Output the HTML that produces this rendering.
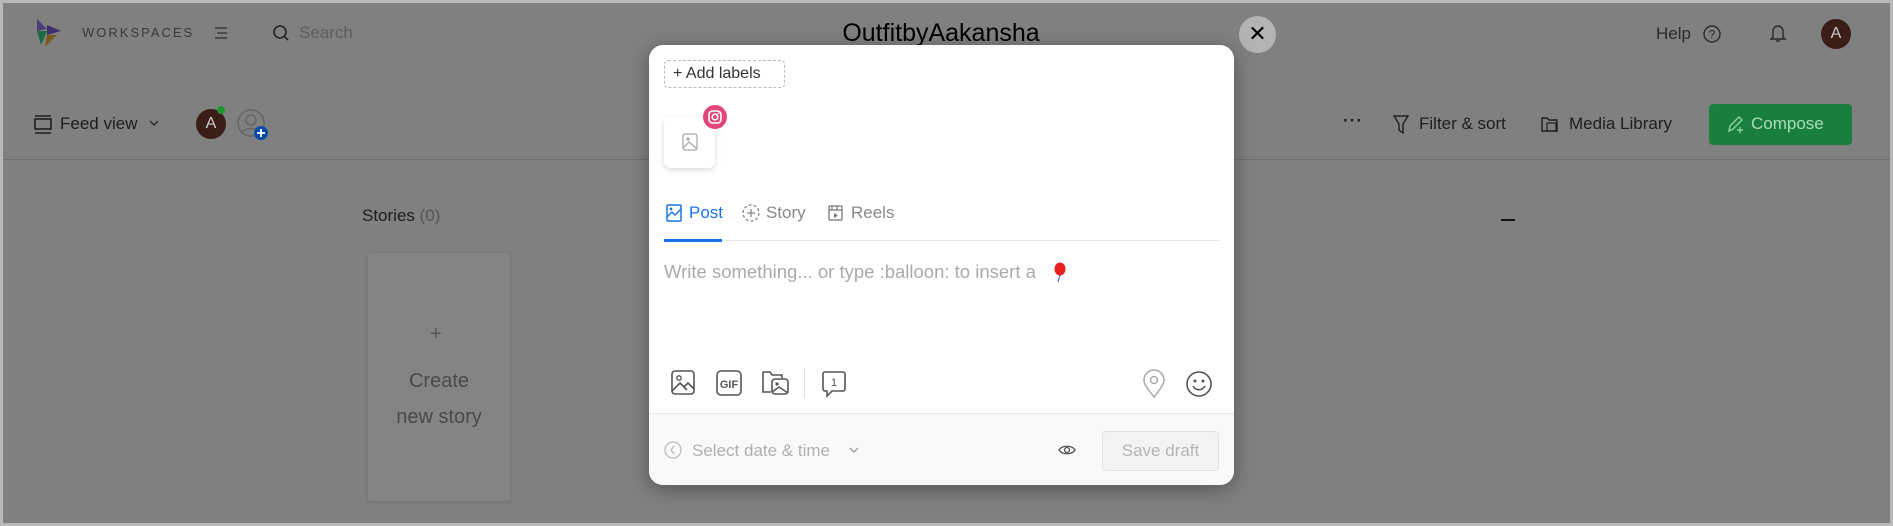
<!DOCTYPE html>
<html><head><meta charset="utf-8"><style>
*{box-sizing:border-box;margin:0;padding:0}
body{width:1893px;height:526px;overflow:hidden;background:#b9b9b9;font-family:"Liberation Sans",sans-serif;position:relative}
.page{position:absolute;left:3px;top:3px;width:1887px;height:520px;background:#808080;overflow:hidden}
.a{position:absolute;white-space:nowrap}
.dk{color:#1e1e1e}
.g{color:#2a2a2a}
svg{position:absolute;overflow:visible}
.modal{position:absolute;left:649px;top:45px;width:585px;height:440px;background:#fff;border-radius:14px;box-shadow:0 4px 20px rgba(0,0,0,.35);overflow:hidden}
.m{position:absolute;white-space:nowrap}
</style></head><body>
<div class="page">
<svg style="left:30px;top:14px" width="30" height="32" viewBox="0 0 30 32">
<path d="M4 2 L14 12 L4 14Z" fill="#4b3d78"/><path d="M14 8 L28 14 L14 18Z" fill="#3e2f6e"/>
<path d="M4 14 L14 14 L8 28Z" fill="#1d6b3a"/><path d="M14 18 L24 18 L12 30Z" fill="#7a5a1a"/></svg>
<div class="a" style="left:79px;top:22px;font-size:13px;letter-spacing:2px;color:#3a3a3a">WORKSPACES</div>
<svg style="left:212px;top:24px" width="12" height="12"><path d="M0 1H12M2 6H12M0 11H12" stroke="#3a3a3a" stroke-width="1.4"/></svg>
<svg style="left:270px;top:22px" width="16" height="16"><circle cx="7" cy="7" r="6" stroke="#222" stroke-width="1.6" fill="none"/><path d="M11 11L15 15" stroke="#222" stroke-width="1.6"/></svg>
<div class="a" style="left:296px;top:20px;font-size:17px;color:#5e5e5e">Search</div>
<div class="a" style="left:818px;top:16px;font-size:25px;color:#000;width:240px;text-align:center">OutfitbyAakansha</div>
<div class="a" style="left:1236px;top:13px;width:37px;height:37px;border-radius:50%;background:#b3b3b3;color:#000;font-size:22px;text-align:center;line-height:36px">✕</div>
<div class="a g" style="left:1653px;top:21px;font-size:17px">Help</div>
<svg style="left:1700px;top:22px" width="18" height="18"><circle cx="9" cy="9" r="8" stroke="#2a2a2a" stroke-width="1.4" fill="none"/><text x="9" y="13.5" font-size="12" text-anchor="middle" fill="#2a2a2a" font-family="Liberation Sans">?</text></svg>
<svg style="left:1767px;top:20px" width="16" height="20"><path d="M3 14V8a5 5 0 0110 0v6l2 2H1z" stroke="#2a2a2a" stroke-width="1.4" fill="none"/><path d="M6 18h4" stroke="#2a2a2a" stroke-width="1.4"/></svg>
<div class="a" style="left:1818px;top:16px;width:30px;height:30px;border-radius:50%;background:#3b1e18;color:#ccc;font-size:16px;text-align:center;line-height:30px">A</div>
<svg style="left:31px;top:112px" width="18" height="20"><rect x="1" y="4" width="16" height="10" stroke="#1e1e1e" stroke-width="1.6" fill="none"/><path d="M1 1H17M1 18H17" stroke="#1e1e1e" stroke-width="1.6"/></svg>
<div class="a dk" style="left:57px;top:111px;font-size:17px">Feed view</div>
<svg style="left:146px;top:117px" width="10" height="6"><path d="M1 1L5 5L9 1" stroke="#2a2a2a" stroke-width="1.3" fill="none"/></svg>
<div class="a" style="left:193px;top:106px;width:30px;height:30px;border-radius:50%;background:#3b1e18;color:#ccc;font-size:16px;text-align:center;line-height:30px">A</div>
<div class="a" style="left:214px;top:103px;width:8px;height:8px;border-radius:50%;background:#1a9a2a"></div>
<svg style="left:234px;top:106px" width="32" height="32"><circle cx="14" cy="14" r="13" stroke="#666" stroke-width="1.6" fill="none"/><circle cx="14" cy="11" r="5" stroke="#666" stroke-width="1.6" fill="none"/><path d="M5 24c3-6 15-6 18 0" stroke="#666" stroke-width="1.6" fill="none"/><circle cx="24" cy="24" r="7" fill="#0a4aa8"/><path d="M24 20v8M20 24h8" stroke="#fff" stroke-width="1.8"/></svg>
<div class="a dk" style="left:1340px;top:108px;font-size:17px;font-weight:bold;letter-spacing:1px">···</div>
<svg style="left:1390px;top:112px" width="16" height="20"><path d="M1 1H15L10 9V18L6 15V9Z" stroke="#1e1e1e" stroke-width="1.4" fill="none"/></svg>
<div class="a dk" style="left:1416px;top:111px;font-size:17px">Filter &amp; sort</div>
<svg style="left:1538px;top:112px" width="18" height="18"><path d="M1 3h5l2 2h8v11H1z" stroke="#1e1e1e" stroke-width="1.4" fill="none"/><rect x="6" y="8" width="9" height="8" stroke="#1e1e1e" stroke-width="1.2" fill="none"/></svg>
<div class="a dk" style="left:1566px;top:111px;font-size:17px">Media Library</div>
<div class="a" style="left:1706px;top:101px;width:143px;height:41px;background:#1a7f3e;border-radius:4px"></div>
<svg style="left:1724px;top:112px" width="18" height="18"><path d="M2 16L3 11L12 2L15 5L6 14Z" stroke="#8fd0a4" stroke-width="1.4" fill="none"/><path d="M13 12v6M10 15h6" stroke="#8fd0a4" stroke-width="1.4"/></svg>
<div class="a" style="left:1748px;top:111px;font-size:17px;color:#a8dcb8">Compose</div>
<div class="a" style="left:0;top:156px;width:1887px;height:1px;background:#707070"></div>
<div class="a dk" style="left:359px;top:203px;font-size:17px">Stories <span style="color:#555">(0)</span></div>
<div class="a" style="left:365px;top:250px;width:142px;height:248px;background:#848484;box-shadow:0 1px 4px rgba(0,0,0,.15);border-radius:3px"></div>
<div class="a" style="left:427px;top:320px;font-size:20px;color:#555">+</div>
<div class="a" style="left:365px;top:360px;width:142px;text-align:center;font-size:20px;color:#4a4a4a;line-height:36px;white-space:normal">Create<br>new story</div>
<div class="a" style="left:1498px;top:216px;width:14px;height:2px;background:#111"></div>
</div>
<div class="modal">
<div class="m" style="left:15px;top:15px;width:121px;height:28px;border:1px dashed #bbb;border-radius:4px;font-size:16px;color:#333;line-height:26px;padding-left:8px">+ Add labels</div>
<div class="m" style="left:15px;top:72px;width:51px;height:51px;border-radius:6px;background:#fff;box-shadow:0 2px 6px rgba(0,0,0,.15)"></div>
<svg style="left:33px;top:88px" width="16" height="18"><rect x="1" y="1" width="14" height="16" rx="2" stroke="#aaa" stroke-width="1.3" fill="none"/><circle cx="6" cy="6" r="1.6" fill="#aaa"/><path d="M1 15L7 9L15 16" stroke="#aaa" stroke-width="1.3" fill="none"/></svg>
<div class="m" style="left:54px;top:60px;width:24px;height:24px;border-radius:50%;background:#e0457b"></div>
<svg style="left:59px;top:65px" width="14" height="14"><rect x="1" y="1" width="12" height="12" rx="3.5" stroke="#fff" stroke-width="1.6" fill="none"/><circle cx="7" cy="7" r="2.8" stroke="#fff" stroke-width="1.6" fill="none"/><circle cx="10.5" cy="3.5" r=".9" fill="#fff"/></svg>
<svg style="left:17px;top:159px" width="16" height="18"><rect x="1" y="1" width="14" height="16" rx="1" stroke="#1a73e8" stroke-width="1.5" fill="none"/><path d="M1 13L6 8L9 11L15 5" stroke="#1a73e8" stroke-width="1.4" fill="none"/><circle cx="5" cy="5" r="1.4" fill="#1a73e8"/></svg>
<div class="m" style="left:40px;top:158px;font-size:17px;color:#1a73e8">Post</div>
<svg style="left:93px;top:159px" width="18" height="18"><circle cx="9" cy="9" r="8" stroke="#888" stroke-width="1.3" fill="none" stroke-dasharray="3 2"/><path d="M9 5v8M5 9h8" stroke="#888" stroke-width="1.3"/></svg>
<div class="m" style="left:117px;top:158px;font-size:17px;color:#888">Story</div>
<svg style="left:179px;top:160px" width="15" height="16"><rect x="1" y="1" width="13" height="14" rx="1" stroke="#777" stroke-width="1.3" fill="none"/><path d="M1 5H14M4 1v4M9 1v4" stroke="#777" stroke-width="1.2"/><path d="M6 8L10 10.5L6 13Z" fill="#777"/></svg>
<div class="m" style="left:202px;top:158px;font-size:17px;color:#888">Reels</div>
<div class="m" style="left:15px;top:195px;width:555px;height:1px;background:#e5e7eb"></div>
<div class="m" style="left:15px;top:194px;width:58px;height:3px;background:#1a73e8"></div>
<div class="m" style="left:15px;top:216px;font-size:18.5px;color:#aaa">Write something... or type :balloon: to insert a</div>
<svg style="left:403px;top:217px" width="14" height="22"><ellipse cx="8" cy="7" rx="5.5" ry="6.5" fill="#e82020"/><path d="M8 13L6 20" stroke="#4a4ae0" stroke-width="1"/></svg>
<svg style="left:22px;top:325px" width="24" height="26"><rect x="1" y="1" width="22" height="23" rx="3" stroke="#555" stroke-width="1.6" fill="none"/><circle cx="8" cy="8" r="2.2" stroke="#555" stroke-width="1.4" fill="none"/><path d="M1 21L9 13L16 20M13 17L17 13L23 19" stroke="#555" stroke-width="1.6" fill="none"/></svg>
<svg style="left:67px;top:325px" width="26" height="26"><rect x="1" y="1" width="24" height="24" rx="4" stroke="#555" stroke-width="1.6" fill="none"/><text x="13" y="18" text-anchor="middle" font-size="11" font-weight="bold" fill="#555" font-family="Liberation Sans">GIF</text></svg>
<svg style="left:113px;top:323px" width="28" height="28"><path d="M1 4h7l2 3h10v3" stroke="#555" stroke-width="1.6" fill="none"/><path d="M1 4v20h8" stroke="#555" stroke-width="1.6" fill="none"/><rect x="10" y="11" width="16" height="15" rx="3" stroke="#555" stroke-width="1.6" fill="none"/><circle cx="15" cy="16" r="1.6" fill="#555"/><path d="M10 24L17 19L26 25" stroke="#555" stroke-width="1.5" fill="none"/></svg>
<div class="m" style="left:155px;top:323px;width:1px;height:30px;background:#ddd"></div>
<svg style="left:173px;top:326px" width="24" height="26"><path d="M3 1h18a2 2 0 012 2v15a2 2 0 01-2 2H10L5 25V20H3a2 2 0 01-2-2V3a2 2 0 012-2z" stroke="#555" stroke-width="1.6" fill="none"/><text x="12" y="15" text-anchor="middle" font-size="11" fill="#555" font-family="Liberation Sans">1</text></svg>
<svg style="left:494px;top:325px" width="22" height="28"><path d="M11 27C4 18 1 14 1 10a10 10 0 0120 0c0 4-3 8-10 17z" stroke="#aaa" stroke-width="1.5" fill="none"/><circle cx="11" cy="10" r="3.5" stroke="#aaa" stroke-width="1.5" fill="none"/></svg>
<svg style="left:537px;top:326px" width="26" height="26"><circle cx="13" cy="13" r="12" stroke="#555" stroke-width="1.6" fill="none"/><circle cx="9" cy="10" r="1.5" fill="#555"/><circle cx="17" cy="10" r="1.5" fill="#555"/><path d="M7 15c3 5 9 5 12 0" stroke="#555" stroke-width="1.6" fill="none"/></svg>
<div class="m" style="left:0;top:368px;width:585px;height:72px;background:#f8f9fa;border-top:1px solid #e8e8e8"></div>
<svg style="left:15px;top:396px" width="18" height="18"><circle cx="9" cy="9" r="8" stroke="#bbb" stroke-width="1.3" fill="none"/><path d="M10 5L7 9L10 13" stroke="#bbb" stroke-width="1.3" fill="none"/></svg>
<div class="m" style="left:43px;top:396px;font-size:17px;color:#b0b0b0">Select date &amp; time</div>
<svg style="left:200px;top:402px" width="10" height="6"><path d="M1 1L5 5L9 1" stroke="#999" stroke-width="1.3" fill="none"/></svg>
<svg style="left:409px;top:399px" width="18" height="12"><path d="M1 6C4 1 14 1 17 6C14 11 4 11 1 6Z" stroke="#555" stroke-width="1.3" fill="none"/><circle cx="9" cy="6" r="2.5" stroke="#555" stroke-width="1.3" fill="none"/></svg>
<div class="m" style="left:453px;top:386px;width:117px;height:40px;border:1px solid #e2e2e2;border-radius:4px;background:#f3f3f3;color:#b5b5b5;font-size:17px;text-align:center;line-height:38px">Save draft</div>
</div>
</body></html>
